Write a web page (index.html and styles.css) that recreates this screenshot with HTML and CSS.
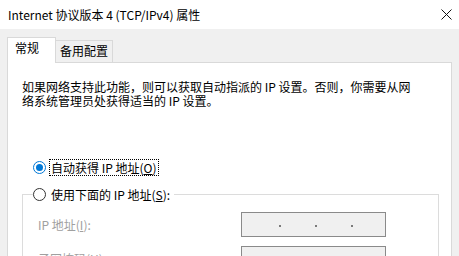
FILE: index.html
```html
<!DOCTYPE html>
<html lang="zh-CN">
<head>
<meta charset="utf-8">
<title>Internet 协议版本 4 (TCP/IPv4) 属性</title>
<link rel="stylesheet" href="styles.css">
</head>
<body>
<div class="window">
  <div class="titlebar">
    <span class="title">Internet 协议版本 4 (TCP/IPv4) 属性</span>
    <span class="close"><svg width="11" height="11" viewBox="0 0 11 11"><path d="M0.5 0.5 L10.5 10.5 M10.5 0.5 L0.5 10.5" stroke="#111" stroke-width="1" fill="none"/></svg></span>
  </div>
  <div class="dialog">
    <div class="tabs">
      <div class="tab active">常规</div>
      <div class="tab">备用配置</div>
    </div>
    <div class="panel">
      <p class="intro">如果网络支持此功能，则可以获取自动指派的 IP 设置。否则，你需要从网<br>络系统管理员处获得适当的 IP 设置。</p>
      <div class="radio-row first">
        <span class="radio checked"></span>
        <span class="rtext focus">自动获得 IP 地址(<u>O</u>)</span>
      </div>
      <fieldset class="group">
        <legend>
          <span class="radio-row">
            <span class="radio"></span>
            <span class="rtext">使用下面的 IP 地址(<u>S</u>):</span>
          </span>
        </legend>
        <div class="rows">
          <span class="lbl">IP 地址(<u>I</u>):</span>
          <span class="ipbox"><i></i><i></i><i></i></span>
          <span class="lbl">子网掩码(<u>U</u>):</span>
          <span class="ipbox"><i></i><i></i><i></i></span>
        </div>
      </fieldset>
    </div>
  </div>
</div>
</body>
</html>
```

FILE: styles.css
```css
html, body {
  margin: 0;
  padding: 0;
}
body {
  width: 459px;
  height: 256px;
  overflow: hidden;
  background: #f0f0f0;
  font-family: "Noto Sans CJK SC", "Noto Sans", sans-serif;
  font-size: 12px;
  color: #000;
}
.window {
  width: 459px;
  height: 256px;
  display: flex;
  flex-direction: column;
}
.titlebar {
  height: 29px;
  flex: none;
  background: #fff;
  display: flex;
  align-items: center;
  justify-content: space-between;
  padding: 0 7px 0 8px;
}
.title {
  font-size: 12px;
  line-height: 14px;
  white-space: nowrap;
}
.close {
  width: 11px;
  height: 11px;
  display: flex;
}
.dialog {
  flex: 1;
  background: #f0f0f0;
  padding: 8px 7px 0 7px;
  display: flex;
  flex-direction: column;
  min-height: 0;
}
.tabs {
  display: flex;
  align-items: flex-end;
  height: 26px;
  margin-bottom: -1px;
  position: relative;
  z-index: 1;
  flex: none;
}
.tab {
  box-sizing: border-box;
  height: 22px;
  width: 57px;
  margin-bottom: 1px;
  padding: 3px 0 0 4px;
  line-height: 14px;
  border: 1px solid #d9d9d9;
  border-bottom: none;
  border-left: none;
  background: #f0f0f0;
  white-space: nowrap;
}
.tab.active {
  height: 26px;
  width: 49px;
  margin-bottom: 0;
  padding: 3px 0 0 7px;
  background: #fff;
  border-left: 1px solid #d9d9d9;
}
.panel {
  flex: 1;
  background: #fff;
  border: 1px solid #d9d9d9;
  border-bottom: none;
  min-height: 0;
}
.intro {
  margin: 17px 0 0 14px;
  line-height: 14px;
  white-space: nowrap;
}
.radio-row {
  display: flex;
  align-items: center;
  gap: 3px;
  white-space: nowrap;
}
.radio-row.first {
  margin: 51px 0 0 25px;
  height: 17px;
}
.radio {
  box-sizing: border-box;
  width: 13px;
  height: 13px;
  border-radius: 50%;
  border: 1px solid #333;
  background: #fff;
  flex: none;
  position: relative;
}
.radio.checked {
  border-color: #0078d7;
}
.radio.checked::after {
  content: "";
  position: absolute;
  left: 2px;
  top: 2px;
  width: 7px;
  height: 7px;
  border-radius: 50%;
  background: #0078d7;
}
.rtext {
  line-height: 15px;
  padding: 0 1px;
  border: 1px solid transparent;
}
.rtext.focus {
  border: 1px dotted #000;
}
u {
  text-decoration: underline;
  text-underline-offset: 1px;
}
.group {
  margin: 10px 0 0 14px;
  padding: 0 0 20px 15px;
  width: 417px;
  box-sizing: border-box;
  border: 1px solid #dcdcdc;
  min-inline-size: 0;
}
.group legend {
  padding: 0 2px 0 0;
  margin-left: -5px;
  height: 17px;
  display: block;
}
.group legend .radio-row {
  height: 17px;
}
.rows {
  margin-top: 9px;
  display: grid;
  grid-template-columns: 203px 145px;
  grid-auto-rows: 25px;
  row-gap: 9px;
  align-items: center;
}
.lbl {
  color: #a0a0a0;
  line-height: 14px;
  white-space: nowrap;
}
.ipbox {
  box-sizing: border-box;
  height: 25px;
  border: 1px solid #8a8a8a;
  background: #f0f0f0;
  display: flex;
  align-items: center;
  padding-left: 37px;
  gap: 34px;
}
.ipbox i {
  width: 2px;
  height: 2px;
  background: #7a7a7a;
  margin-top: 3px;
}
```
